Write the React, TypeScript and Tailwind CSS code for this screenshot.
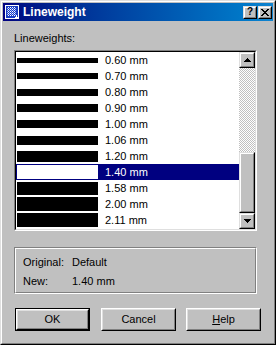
const weights = [
  { label: "0.60 mm", bar: "h-[5px]" },
  { label: "0.70 mm", bar: "h-[6px]" },
  { label: "0.80 mm", bar: "h-[7px]" },
  { label: "0.90 mm", bar: "h-[8px]" },
  { label: "1.00 mm", bar: "h-[8px]" },
  { label: "1.06 mm", bar: "h-[9px]" },
  { label: "1.20 mm", bar: "h-[11px]" },
  { label: "1.40 mm", bar: "h-[14px]", selected: true },
  { label: "1.58 mm", bar: "h-[13px]" },
  { label: "2.00 mm", bar: "h-[14px]" },
  { label: "2.11 mm", bar: "h-[14px]" },
];

const outerRaised = "border border-t-[#dfdfdf] border-l-[#dfdfdf] border-r-black border-b-black";
const innerRaised = "border border-t-white border-l-white border-r-[#808080] border-b-[#808080]";

const TitleIcon = () => (
  <svg width="14" height="14" viewBox="0 0 14 14" shapeRendering="crispEdges">
    <rect x="0.5" y="0.5" width="13" height="13" fill="#1a3fc4" stroke="#fff" />
    {[3, 5, 7, 9].map((x) => (
      <line key={"v" + x} x1={x + 0.5} y1="2" x2={x + 0.5} y2="11" stroke="#fff" strokeDasharray="1 1" />
    ))}
    {[3, 5, 7, 9].map((y) => (
      <line key={"h" + y} x1="2" y1={y + 0.5} x2="11" y2={y + 0.5} stroke="#9fb6ff" strokeDasharray="1 1" />
    ))}
    <path d="M11.5 10v4M9.5 12.5h4" stroke="#fff" />
  </svg>
);

const TitleButton = ({ children }: { children: React.ReactNode }) => (
  <div className={`w-[14px] h-[13px] bg-[#c0c0c0] ${outerRaised}`}>
    <div className={`h-full flex items-center justify-center ${innerRaised}`}>{children}</div>
  </div>
);

const TitleBar = () => (
  <div className="h-[18px] shrink-0 flex items-center bg-linear-to-r from-[#000080] to-[#1084d0] pl-[2px] pr-[1px]">
    <TitleIcon />
    <span className="ml-[4px] text-white font-bold text-[12px] leading-[18px]">Lineweight</span>
    <div className="ml-auto flex gap-[1px]">
      <TitleButton>
        <span className="font-bold text-[10px] leading-none text-black">?</span>
      </TitleButton>
      <TitleButton>
        <svg width="8" height="7" viewBox="0 0 8 7" shapeRendering="crispEdges">
          <path d="M0 0h2v1H0zM6 0h2v1H6zM1 1h2v1H1zM5 1h2v1H5zM2 2h4v1H2zM3 3h2v1H3zM2 4h4v1H2zM1 5h2v1H1zM5 5h2v1H5zM0 6h2v1H0zM6 6h2v1H6z" fill="#000" />
        </svg>
      </TitleButton>
    </div>
  </div>
);

const Arrow = ({ down }: { down?: boolean }) => (
  <svg width="7" height="4" viewBox="0 0 7 4" shapeRendering="crispEdges">
    <path d={down ? "M0 0h7L3.5 4z" : "M3.5 0L7 4H0z"} fill="#000" />
  </svg>
);

const ScrollButton = ({ down }: { down?: boolean }) => (
  <div className={`h-[16px] bg-[#c0c0c0] ${outerRaised}`}>
    <div className={`h-full flex items-center justify-center ${innerRaised}`}>
      <Arrow down={down} />
    </div>
  </div>
);

const Scrollbar = () => (
  <div className="w-[16px] shrink-0 flex flex-col">
    <ScrollButton />
    <div className="h-[84px] bg-[repeating-conic-gradient(#c0c0c0_0_25%,#ffffff_0_50%)] bg-[length:2px_2px]" />
    <div className={`h-[61px] bg-[#c0c0c0] ${outerRaised}`}>
      <div className={`h-full ${innerRaised}`} />
    </div>
    <ScrollButton down />
  </div>
);

const ListBox = () => (
  <div className="mt-[5px] h-[181px] border border-t-[#808080] border-l-[#808080] border-r-white border-b-white">
    <div className="h-full flex bg-white border border-t-black border-l-black border-r-[#dfdfdf] border-b-[#dfdfdf]">
      <div className="flex-1 flex flex-col">
        {weights.map((w) => (
          <div
            key={w.label}
            className={`h-[16px] flex items-center ${w.selected ? "bg-[#000080] text-white" : ""}`}
          >
            <div className={`ml-[1px] w-[81px] ${w.bar} ${w.selected ? "bg-white" : "bg-black"}`} />
            <span className="ml-[7px] leading-[16px]">{w.label}</span>
          </div>
        ))}
      </div>
      <Scrollbar />
    </div>
  </div>
);

const InfoGroup = () => (
  <div className="mt-[16px] h-[47px] border border-t-[#808080] border-l-[#808080] border-r-white border-b-white">
    <div className="h-full border border-t-white border-l-white border-r-[#808080] border-b-[#808080] pl-[7px] pt-[7px]">
      <div className="grid grid-cols-[49px_1fr] gap-y-[6px] leading-[13px]">
        <span>Original:</span>
        <span>Default</span>
        <span>New:</span>
        <span>1.40 mm</span>
      </div>
    </div>
  </div>
);

const Button = ({ children, isDefault, className }: { children: React.ReactNode; isDefault?: boolean; className?: string }) =>
  isDefault ? (
    <div className={`w-[75px] h-[23px] shrink-0 border border-black ${className ?? ""}`}>
      <div className="h-full border border-t-white border-l-white border-r-black border-b-black">
        <div className="h-full flex items-center justify-center border border-t-[#dfdfdf] border-l-[#dfdfdf] border-r-[#808080] border-b-[#808080]">
          {children}
        </div>
      </div>
    </div>
  ) : (
    <div className={`w-[75px] h-[23px] shrink-0 border border-t-white border-l-white border-r-black border-b-black ${className ?? ""}`}>
      <div className="h-full flex items-center justify-center border border-t-[#dfdfdf] border-l-[#dfdfdf] border-r-[#808080] border-b-[#808080]">
        {children}
      </div>
    </div>
  );

export default function App() {
  return (
    <div className="w-[276px] h-[345px] bg-[#c0c0c0] font-['Liberation_Sans',Arial,sans-serif] text-[11px] text-black overflow-hidden">
      <div className="h-full border border-t-[#dfdfdf] border-l-[#dfdfdf] border-r-black border-b-black">
        <div className="h-full flex flex-col p-px border border-t-white border-l-white border-r-[#808080] border-b-[#808080]">
          <TitleBar />
          <div className="flex flex-col pl-[11px] pr-[16px]">
            <div className="mt-[11px] leading-[13px]">Lineweights:</div>
            <ListBox />
            <InfoGroup />
            <div className="mt-[14px] flex">
              <Button isDefault className="ml-[1px]">OK</Button>
              <Button className="ml-[11px]">Cancel</Button>
              <Button className="ml-[10px]">
                <span>
                  <span className="underline">H</span>elp
                </span>
              </Button>
            </div>
          </div>
        </div>
      </div>
    </div>
  );
}
